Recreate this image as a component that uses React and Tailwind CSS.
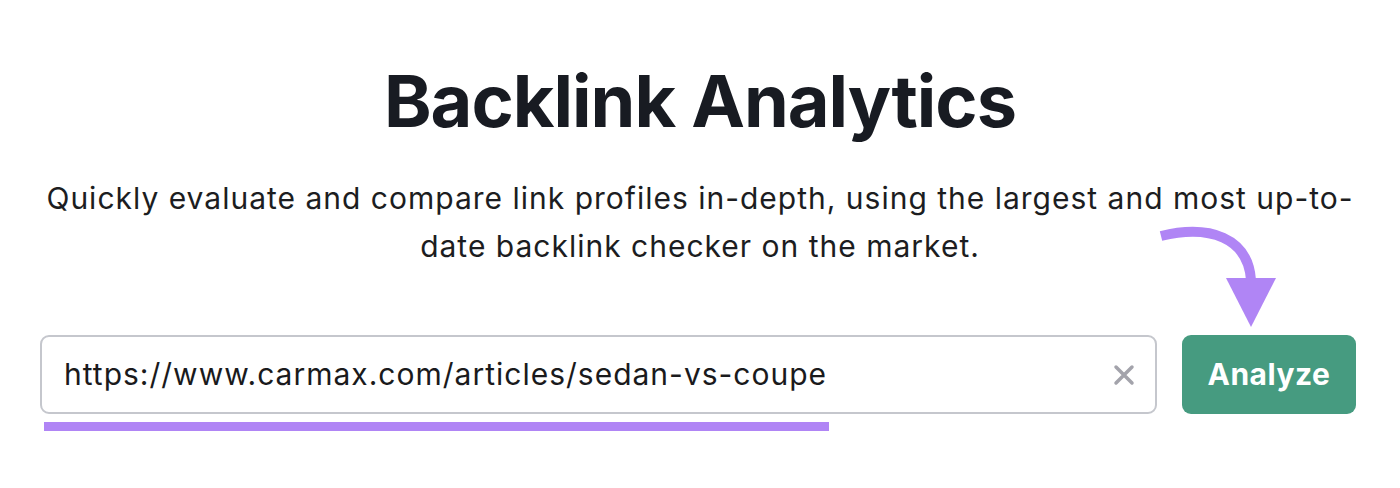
export default function App() {
  return (
    <div className="relative w-[1400px] h-[488px] bg-white flex flex-col items-center font-['Inter',sans-serif]">
      <h1 className="mt-[55px] text-[72px] leading-[92px] font-bold tracking-[-1px] text-[#181b22]">
        Backlink Analytics
      </h1>
      <p className="mt-[27px] w-[1380px] text-center text-[30px] leading-[48px] tracking-[1px] text-[#1c1d21]">
        Quickly evaluate and compare link profiles in-depth, using the largest and most up-to-
        <br />
        date backlink checker on the market.
      </p>
      <div className="mt-[65px] w-[1316px] flex gap-[25px] self-start ml-[40px]">
        <div className="relative flex-1">
          <div className="h-[79px] rounded-[9px] border-2 border-[#c5c7cd] flex items-center pl-[22px] pr-[20px]">
            <span className="flex-1 text-[30px] tracking-[1px] text-[#1a1a1c]">https://www.carmax.com/articles/sedan-vs-coupe</span>
            <svg width="22" height="22" viewBox="0 0 22 22" className="shrink-0">
              <path d="M3 3 L19 19 M19 3 L3 19" stroke="#a3a3ab" strokeWidth="3.5" strokeLinecap="round" />
            </svg>
          </div>
          <div className="absolute left-[4px] top-[87px] w-[785px] h-[9px] bg-[#b085f5]" />
        </div>
        <button className="w-[174px] h-[79px] rounded-[9px] bg-[#469b80] text-white text-[30px] font-bold tracking-[0.5px]">
          Analyze
        </button>
      </div>
      <svg className="absolute left-[1140px] top-[220px]" width="160" height="120" viewBox="0 0 160 120">
        <path d="M21 16 C 70 4, 108 18, 111 60" fill="none" stroke="#b085f5" strokeWidth="10" />
        <polygon points="86,58 136,58 111,107" fill="#b085f5" />
      </svg>
    </div>
  );
}
